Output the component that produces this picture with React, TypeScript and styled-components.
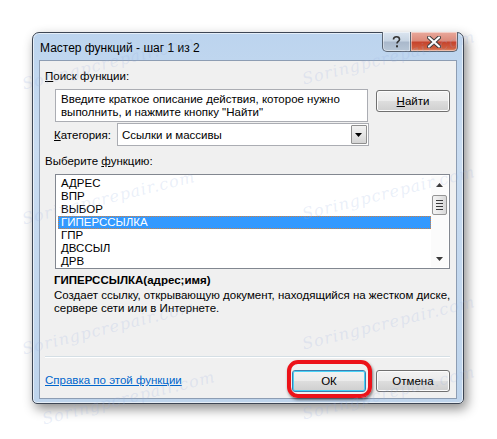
import React from "react";
import styled, { createGlobalStyle } from "styled-components";

const Global = createGlobalStyle`
  html, body { margin: 0; padding: 0; background: #ffffff; }
  body { font-family: "Liberation Sans", Arial, sans-serif; font-size: 11.5px; color: #000; }
  * { box-sizing: border-box; }
`;

const Stage = styled.div`
  position: relative;
  width: 497px;
  height: 439px;
  overflow: hidden;
  padding: 32px 0 0 32px;
  background: #fff;
`;

const Window = styled.div`
  width: 432px;
  height: 372px;
  border: 1px solid #3d4654;
  border-radius: 7px 7px 5px 5px;
  background: linear-gradient(180deg, #bcd4ee 0%, #c9dcf1 30%, #bed4ec 100%);
  box-shadow: 3px 5px 12px rgba(0, 0, 0, 0.45), inset 0 0 0 1px rgba(255, 255, 255, 0.6);
  display: flex;
  flex-direction: column;
  padding: 0 6px 4px 6px;
`;

const TitleBar = styled.div`
  height: 27px;
  display: flex;
  align-items: flex-start;
`;

const TitleText = styled.div`
  padding: 8px 0 0 1px;
  font-size: 12px;
  color: #000;
  flex: 1;
`;

const CaptionButtons = styled.div`
  display: flex;
  margin-top: -1px;
  margin-right: -1px;
`;

const CaptionButton = styled.div<{ $close?: boolean }>`
  height: 20px;
  width: ${(p) => (p.$close ? "47px" : "29px")};
  display: flex;
  align-items: center;
  justify-content: center;
  border: 1px solid #5a6573;
  border-top: none;
  ${(p) => (p.$close ? "border-left: none;" : "")}
  border-radius: ${(p) => (p.$close ? "0 0 5px 0" : "0 0 0 5px")};
  background: ${(p) =>
    p.$close
      ? "linear-gradient(180deg, #e9a99c 0%, #dc8b7b 45%, #c6442d 55%, #cf5e3f 85%, #e08f6c 100%)"
      : "linear-gradient(180deg, #dbe5f0 0%, #c8d5e3 45%, #aab9cc 55%, #b8c6d6 100%)"};
  box-shadow: inset 0 0 0 1px rgba(255, 255, 255, 0.45);
`;

const Client = styled.div`
  flex: 1;
  border: 1px solid #8d9db3;
  background: #f0f0f0;
  display: flex;
  flex-direction: column;
  padding: 8px 6px 0 5px;
`;

const Label = styled.div`
  line-height: 15px;
  white-space: nowrap;
`;

const Indent = styled.div`
  padding-left: 10px;
`;

const SearchRow = styled.div`
  display: flex;
  align-items: flex-start;
  margin-top: 5px;
`;

const SearchBox = styled.div`
  width: 313px;
  height: 33px;
  background: #fff;
  border: 1px solid #abadb3;
  padding: 3px 0 0 5px;
  line-height: 13px;
`;

const Button = styled.div<{ $default?: boolean }>`
  position: relative;
  width: 74px;
  height: 22px;
  margin-left: auto;
  display: flex;
  align-items: center;
  justify-content: center;
  border: 1px solid ${(p) => (p.$default ? "#3c7fb1" : "#707070")};
  border-radius: 3px;
  background: linear-gradient(180deg, #f2f2f2 0%, #ebebeb 48%, #dddddd 52%, #cfcfcf 100%);
  box-shadow: inset 0 0 0 1px ${(p) => (p.$default ? "#48d2f7" : "#fcfcfc")};
`;

const SearchButton = styled(Button)`
  margin-top: 1px;
`;

const CategoryRow = styled.div`
  display: flex;
  align-items: center;
  margin-top: 1px;
  padding-left: 9px;
`;

const Select = styled.div`
  margin-left: 6px;
  width: 252px;
  height: 23px;
  background: #fff;
  border: 1px solid #abadb3;
  display: flex;
  align-items: center;
  padding: 1px 1px 1px 4px;
`;

const SelectText = styled.div`
  flex: 1;
`;

const DropButton = styled.div`
  width: 16px;
  height: 19px;
  border: 1px solid #8f8f8f;
  border-radius: 1px;
  background: linear-gradient(180deg, #f2f2f2 0%, #e6e6e6 50%, #d4d4d4 100%);
  display: flex;
  align-items: center;
  justify-content: center;
`;

const ListLabel = styled(Label)`
  margin-top: 8px;
`;

const ListBox = styled.div`
  margin: 5px 0 0 10px;
  height: 95px;
  border: 1px solid #828790;
  background: #fff;
  display: flex;
  padding: 1px;
`;

const ListItems = styled.div`
  flex: 1;
  display: flex;
  flex-direction: column;
  padding-top: 1px;
`;

const ListItem = styled.div<{ $selected?: boolean }>`
  height: 13px;
  line-height: 13px;
  padding-left: 3px;
  margin-left: 1px;
  white-space: nowrap;
  ${(p) =>
    p.$selected
      ? "background: #3399ff; color: #fff; outline: 1px dotted #d08040; outline-offset: -1px;"
      : ""}
`;

const ScrollBar = styled.div`
  width: 17px;
  display: flex;
  flex-direction: column;
  align-items: center;
  background: #fbfbfb;
`;

const ScrollArrow = styled.div`
  height: 17px;
  display: flex;
  align-items: center;
  justify-content: center;
`;

const Thumb = styled.div`
  width: 15px;
  height: 20px;
  margin-top: 2px;
  border: 1px solid #959595;
  border-radius: 2px;
  background: linear-gradient(90deg, #f3f3f3 0%, #e8e8e8 50%, #d8d8d8 100%);
  display: flex;
  flex-direction: column;
  align-items: center;
  justify-content: center;
  gap: 2px;
`;

const Grip = styled.div`
  width: 7px;
  height: 1px;
  background: #3a3a3a;
`;

const Spacer = styled.div`
  flex: 1;
`;

const FuncTitle = styled.div`
  margin: 4px 0 0 9px;
  font-weight: bold;
  line-height: 14px;
`;

const Description = styled.div`
  margin: 2px 0 0 9px;
  line-height: 13px;
  white-space: nowrap;
`;

const Separator = styled.div`
  margin-top: auto;
  height: 2px;
  border-top: 1px solid #d5dfe5;
  border-bottom: 1px solid #ffffff;
`;

const BottomRow = styled.div`
  height: 40px;
  display: flex;
  align-items: flex-start;
  padding-top: 12px;
`;

const HelpLink = styled.a`
  color: #0066cc;
  text-decoration: underline;
  margin-top: 3px;
  line-height: 14px;
  cursor: pointer;
`;

const OkButton = styled(Button)`
  margin-left: auto;
  margin-right: 10px;
  &::after {
    content: "";
    position: absolute;
    top: -11px;
    left: -6px;
    right: -7px;
    bottom: -7px;
    border: 4px solid #ec1219;
    border-radius: 11px;
    box-shadow: 1px 2px 3px rgba(0, 0, 0, 0.5);
    pointer-events: none;
  }
`;

const CancelButton = styled(Button)`
  margin-left: 0;
`;

const Watermark = styled.div<{ $x: number; $y: number }>`
  position: absolute;
  left: ${(p) => p.$x}px;
  top: ${(p) => p.$y}px;
  font-family: "DejaVu Serif", serif;
  font-style: italic;
  font-size: 16px;
  letter-spacing: 1px;
  color: rgba(150, 175, 225, 0.2);
  transform: rotate(-14deg);
  transform-origin: left top;
  white-space: nowrap;
  pointer-events: none;
`;

const items = ["АДРЕС", "ВПР", "ВЫБОР", "ГИПЕРССЫЛКА", "ГПР", "ДВССЫЛ", "ДРВ"];

const marks: [number, number][] = [
  [20, 75],
  [300, 70],
  [20, 210],
  [300, 205],
  [20, 340],
  [300, 335],
  [40, 410],
  [300, 405],
];

export default function App() {
  return (
    <>
      <Global />
      <Stage>
        <Window>
          <TitleBar>
            <TitleText>Мастер функций - шаг 1 из 2</TitleText>
            <CaptionButtons>
              <CaptionButton>
                <svg width="9" height="12" viewBox="0 0 9 12">
                  <path
                    d="M1.5 3.5 C1.5 1.5 3 0.8 4.5 0.8 C6.3 0.8 7.5 1.8 7.5 3.4 C7.5 5.4 5 5.5 5 7.6"
                    fill="none"
                    stroke="#333"
                    strokeWidth="1.6"
                  />
                  <rect x="4" y="9.3" width="2" height="2" fill="#333" />
                </svg>
              </CaptionButton>
              <CaptionButton $close>
                <svg width="14" height="12" viewBox="0 0 14 12">
                  <path
                    d="M2 1.5 L12 10.5 M12 1.5 L2 10.5"
                    stroke="#3a3a3a"
                    strokeWidth="4"
                    strokeLinecap="round"
                  />
                  <path
                    d="M2 1.5 L12 10.5 M12 1.5 L2 10.5"
                    stroke="#ffffff"
                    strokeWidth="2.2"
                    strokeLinecap="round"
                  />
                </svg>
              </CaptionButton>
            </CaptionButtons>
          </TitleBar>
          <Client>
            <Label>
              <u>П</u>оиск функции:
            </Label>
            <Indent>
              <SearchRow>
                <SearchBox>
                  Введите краткое описание действия, которое нужно
                  <br />
                  выполнить, и нажмите кнопку "Найти"
                </SearchBox>
                <SearchButton>
                  <u>Н</u>айти
                </SearchButton>
              </SearchRow>
            </Indent>
            <CategoryRow>
              <span>
                <u>К</u>атегория:
              </span>
              <Select>
                <SelectText>Ссылки и массивы</SelectText>
                <DropButton>
                  <svg width="7" height="4" viewBox="0 0 7 4">
                    <path d="M0 0 H7 L3.5 4 Z" fill="#000" />
                  </svg>
                </DropButton>
              </Select>
            </CategoryRow>
            <ListLabel>
              Выберите <u>ф</u>ункцию:
            </ListLabel>
            <ListBox>
              <ListItems>
                {items.map((it) => (
                  <ListItem key={it} $selected={it === "ГИПЕРССЫЛКА"}>
                    {it}
                  </ListItem>
                ))}
              </ListItems>
              <ScrollBar>
                <ScrollArrow>
                  <svg width="7" height="4" viewBox="0 0 7 4">
                    <path d="M0 4 H7 L3.5 0 Z" fill="#3a3a3a" />
                  </svg>
                </ScrollArrow>
                <Thumb>
                  <Grip />
                  <Grip />
                  <Grip />
                  <Grip />
                </Thumb>
                <Spacer />
                <ScrollArrow>
                  <svg width="7" height="4" viewBox="0 0 7 4">
                    <path d="M0 0 H7 L3.5 4 Z" fill="#3a3a3a" />
                  </svg>
                </ScrollArrow>
              </ScrollBar>
            </ListBox>
            <FuncTitle>ГИПЕРССЫЛКА(адрес;имя)</FuncTitle>
            <Description>
              Создает ссылку, открывающую документ, находящийся на жестком диске,
              <br />
              сервере сети или в Интернете.
            </Description>
            <Separator />
            <BottomRow>
              <HelpLink>Справка по этой функции</HelpLink>
              <OkButton $default>ОК</OkButton>
              <CancelButton>Отмена</CancelButton>
            </BottomRow>
          </Client>
        </Window>
        {marks.map(([x, y], i) => (
          <Watermark key={i} $x={x} $y={y}>
            Soringpcrepair.com
          </Watermark>
        ))}
      </Stage>
    </>
  );
}
